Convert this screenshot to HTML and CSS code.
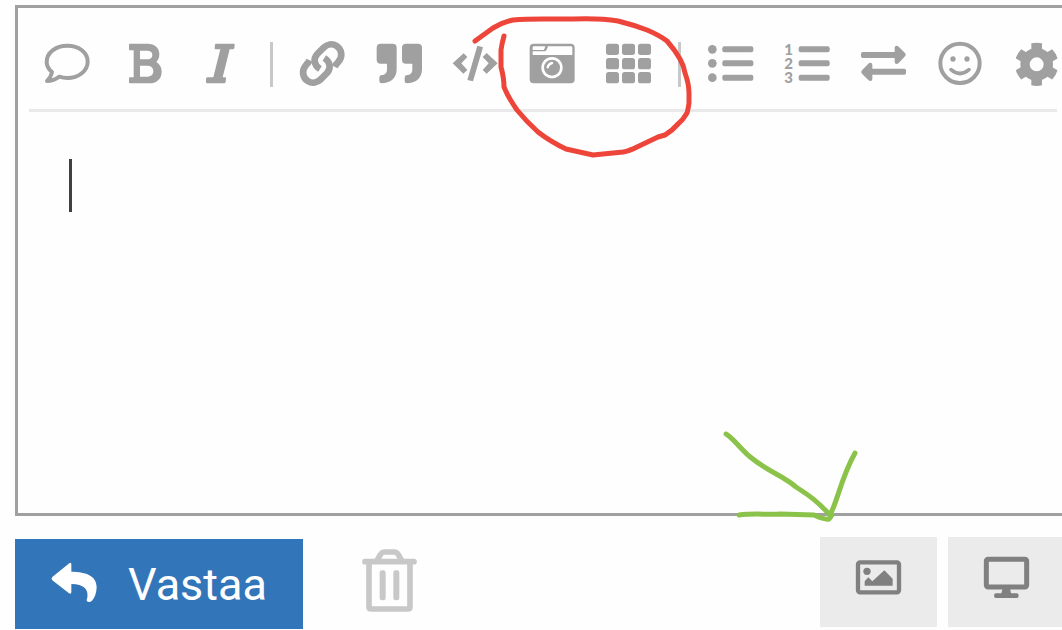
FILE: index.html
```html
<!DOCTYPE html>
<html lang="fi">
<head>
<meta charset="utf-8">
<meta name="viewport" content="width=device-width, initial-scale=1">
<title>Vastaa</title>
<link rel="stylesheet" href="styles.css">
</head>
<body>
<main class="composer">
  <section class="editor">
    <div class="toolbar-wrap">
      <div class="toolbar" role="toolbar" aria-label="Muotoilu">
        <button class="tool" type="button" aria-label="Kommentti"><svg class="icon" viewBox="0 0 144 144"><path class="line" stroke-width="12" stroke-linejoin="round" d="M27 96C16 87 11 76 11 66C11 38 38 17 73 17S134 38 134 65S107 114 73 114Q61 114 49 110Q32 123 12 123Q24 112 27 96Z"/></svg></button>
        <button class="tool" type="button" aria-label="Lihavointi"><svg class="icon" viewBox="-4 0 144 144"><path fill-rule="evenodd" d="M26 11H78C101 11 114 25 114 42C114 54 110 61 105 66C115 72 121 82 121 95C121 117 105 130 84 130H26Q23 130 23 127V115Q23 112 26 112H37V31H26Q23 31 23 28V14Q23 11 26 11ZM56 32V58H80Q93 57 93 45T80 32ZM56 77V110H80Q96 109 96 94T80 77Z"/></svg></button>
        <button class="tool" type="button" aria-label="Kursivointi"><svg class="icon" viewBox="-1 0 144 144"><path d="M59 11H112Q116 11 115 15L114 24Q113 28 109 28H100L79 112H86Q90 112 89 116L88 126Q87 130 83 130H33Q29 130 29 126V116Q30 112 34 112H51L72 28H59Q54 28 55 24L56 14Q56 11 59 11Z"/></svg></button>
        <span class="separator" role="separator"></span>
        <button class="tool" type="button" aria-label="Linkki"><svg class="icon" viewBox="0 0 144 144"><g class="line" stroke-width="20"><path d="M110 80Q114 72 120 67C136 50 131 28 116 18C102 9 87 13 77 23L58 42C45 56 48 76 66 87"/><path d="M35 61Q31 69 25 74C9 91 14 113 29 123C43 132 58 128 68 118L87 99C100 85 97 65 79 54"/></g></svg></button>
        <button class="tool" type="button" aria-label="Lainaus"><svg class="icon" viewBox="0 0 144 144"><path id="quote-mark" d="M17 11H53Q65 11 65 23V88C65 115 45 130 20 130Q13 130 13 123V113Q13 106 20 105C32 104 36 98 36 86V71H17Q5 71 5 59V23Q5 11 17 11Z"/><use href="#quote-mark" x="76"/></svg></button>
        <button class="tool" type="button" aria-label="Koodi"><svg class="icon" viewBox="0 0 144 144"><path d="M5 70L38 40L49 51L31 70L49 90L37 101ZM79 17L96 22L66 124L49 120ZM140 70L107 39L95 51L113 70L95 90L107 101Z"/></svg></button>
        <button class="tool" type="button" aria-label="Kuva"><svg class="icon" viewBox="0 0 144 144"><rect x="5" y="11" width="135" height="119" rx="12"/><path class="paper" d="M17 19H52L48 30H14V22Q14 19 17 19ZM60 19H129Q133 19 133 23V45H14V34H49Q54 34 56 29Z"/><circle class="paper" cx="72" cy="83" r="32"/><circle cx="72" cy="83" r="24"/><path d="M59 82Q61 72 72 69" fill="none" stroke="#fff" stroke-width="7" stroke-linecap="round"/></svg></button>
        <button class="tool" type="button" aria-label="Galleria"><svg class="icon" viewBox="2 0 144 144"><g id="grid-row"><rect x="5" y="11" width="39" height="34" rx="8"/><rect x="53" y="11" width="39" height="34" rx="8"/><rect x="101" y="11" width="39" height="34" rx="8"/></g><use href="#grid-row" y="43"/><use href="#grid-row" y="85"/></svg></button>
        <span class="separator" role="separator"></span>
        <button class="tool" type="button" aria-label="Luettelo"><svg class="icon" viewBox="1 0 144 144"><circle cx="17" cy="28" r="13"/><circle cx="17" cy="70" r="13"/><circle cx="17" cy="113" r="13"/><g id="list-lines"><rect x="47" y="19" width="93" height="18" rx="6"/><rect x="47" y="61" width="93" height="18" rx="6"/><rect x="47" y="104" width="93" height="18" rx="6"/></g></svg></button>
        <button class="tool" type="button" aria-label="Numeroitu luettelo"><svg class="icon" viewBox="0 0 144 144"><g class="digits"><text x="17" y="45">1</text><text x="17" y="87">2</text><text x="17" y="129">3</text></g><use href="#list-lines"/></svg></button>
        <button class="tool" type="button" aria-label="Vaihda"><svg class="icon" viewBox="2 0 144 144"><path id="swap-arrow" d="M10 36H106V23Q106 17 112 17Q115 17 118 20L137 39Q142 44 137 49L118 69Q115 72 112 72Q106 72 106 66V54H10Q5 54 5 49V41Q5 36 10 36Z"/><use href="#swap-arrow" transform="rotate(180 72.5 70)"/></svg></button>
        <button class="tool" type="button" aria-label="Hymiö"><svg class="icon" viewBox="0 0 144 144"><circle class="line" cx="72" cy="70" r="59" stroke-width="12"/><circle cx="51" cy="57" r="8"/><circle cx="93" cy="57" r="8"/><path class="line" stroke-width="11" stroke-linecap="round" d="M45 89Q72 112 99 89"/></svg></button>
        <button class="tool" type="button" aria-label="Asetukset"><svg class="icon" viewBox="0 0 144 144"><circle class="line" cx="71" cy="73" r="35" stroke-width="28"/><path id="gear-teeth" d="M55 10Q71 6 87 10V34H55ZM55 136Q71 140 87 136V112H55Z"/><use href="#gear-teeth" transform="rotate(60 71 73)"/><use href="#gear-teeth" transform="rotate(120 71 73)"/></svg></button>
      </div>
    </div>
    <div class="writing">
      <textarea class="message" aria-label="Viesti"></textarea>
      <span class="caret"></span>
    </div>
    <svg class="ink" viewBox="0 0 1062 630" aria-hidden="true">
      <path class="red" d="M475 41L493 28Q503 22 513 20Q525 19 543 19H573Q600 18 618 21Q634 25 647 30Q659 35 667 41Q675 50 680 59Q684 66 685 73Q689 84 689 93V103Q688 110 687 113Q683 120 678 124Q672 131 665 135L658 137L637 147Q629 151 623 152L593 155L566 149Q551 142 538 132Q526 121 517 110Q508 97 504 87Q504 78 501 67V50Q502 43 504 36"/>
      <path class="green" d="M726 434C732 437 738 446 749 456C768 472 782 475 796 487C810 496 817 501 830 515C838 500 841 478 855 453"/>
      <path class="green" d="M739 515C755 513 770 515 780 514L814 515Q825 520 829 519L832 515"/>
    </svg>
  </section>
  <footer class="actions">
    <button class="reply" type="button"><svg class="icon" viewBox="0 0 144 144"><path d="M7 51L56 11Q64 5 64 14V35C110 36 140 48 140 82Q139 108 126 122Q118 129 111 124Q108 121 112 113C116 88 102 72 64 72V96Q64 104 56 99L7 61Q2 56 7 51Z"/></svg><span>Vastaa</span></button>
    <button class="trash" type="button" aria-label="Poista"><svg class="trash-icon" viewBox="66 57 165 189"><path class="line" stroke-width="17" stroke-linejoin="round" d="M87 96V230Q87 237 94 237H203Q210 237 210 230V96"/><path class="line" stroke-width="17" stroke-linecap="round" d="M75 95H222M112 90L121 74Q126 66 134 66H163Q170 66 175 74L184 90"/><rect x="119" y="121" width="18" height="90" rx="7"/><rect x="160" y="121" width="18" height="90" rx="7"/></svg></button>
    <div class="views">
      <button class="view" type="button" aria-label="Lisää kuva"><svg class="icon" viewBox="2 2 144 144"><rect class="line" x="11" y="27" width="123" height="90" rx="6" stroke-width="13"/><circle cx="38" cy="54" r="11"/><path d="M31 97V84L42 72L54 84L90 51L115 76V97Z"/></svg></button>
      <button class="view" type="button" aria-label="Esikatselu"><svg class="icon" viewBox="2 1 144 144"><rect class="line" x="12" y="17" width="121" height="83" rx="5" stroke-width="15"/><path d="M61 104H83L86 119H103Q109 119 109 126T103 133H41Q35 133 35 126T41 119H57Z"/></svg></button>
    </div>
  </footer>
</main>
</body>
</html>
```
FILE: styles.css
```css
* {
  box-sizing: border-box;
}

body {
  margin: 0;
  background: #fefefe;
  font-family: Roboto, sans-serif;
  overflow: hidden;
}

button {
  margin: 0;
  padding: 0;
  border: 0;
  background: none;
  color: inherit;
  font: inherit;
  cursor: pointer;
}

.composer {
  padding: 5px 0 0 15px;
}

.editor {
  border: 3px solid #a0a0a0;
  border-right: 0;
  background: #fefefe;
}

.toolbar-wrap {
  margin: 0 5px 0 11px;
  border-bottom: 3px solid #e9e9e9;
}

.toolbar {
  display: flex;
  align-items: center;
  margin-right: -18px;
  padding: 26px 0 15px;
  color: #a0a0a0;
}

.tool {
  display: flex;
  flex: 3 1 0;
  justify-content: center;
  min-width: 0;
  padding: 6px 0;
}

.separator {
  display: flex;
  flex: 1 1 0;
  justify-content: center;
}

.separator::before {
  content: "";
  width: 3px;
  height: 45px;
  background: #c8c8c8;
}

.icon {
  display: block;
  flex: none;
  width: 48px;
  height: 48px;
  fill: currentColor;
}

.line {
  fill: none;
  stroke: currentColor;
}

.paper {
  fill: #fefefe;
}

.digits {
  font: 900 45px Lato, sans-serif;
  text-anchor: middle;
}

.writing {
  position: relative;
}

.message {
  display: block;
  width: 100%;
  height: 401px;
  padding: 47px 51px;
  border: 0;
  outline: 0;
  background: none;
  color: #404040;
  font: 44px/53px Roboto, sans-serif;
  resize: none;
}

.caret {
  position: absolute;
  top: 47px;
  left: 51px;
  width: 3px;
  height: 53px;
  background: #404040;
}

.ink {
  position: absolute;
  top: 0;
  left: 0;
  width: 1062px;
  height: 630px;
  pointer-events: none;
  fill: none;
  stroke-linecap: round;
  stroke-linejoin: round;
}

.red {
  stroke: #ee453a;
  stroke-width: 5;
}

.green {
  stroke: #8bc34a;
  stroke-width: 5;
}

.actions {
  display: flex;
  align-items: flex-start;
  margin-right: -3px;
  padding-top: 21px;
}

.reply {
  display: flex;
  align-items: center;
  gap: 30px;
  height: 90px;
  margin-top: 2px;
  padding: 0 36px 0 35px;
  background: #3375b9;
  color: #fff;
  font-size: 45px;
}

.trash {
  margin: 12px 0 0 59px;
  color: #c8c8c8;
}

.trash-icon {
  display: block;
  width: 55px;
  height: 63px;
  fill: currentColor;
}

.views {
  display: flex;
  gap: 11px;
  margin-left: auto;
}

.view {
  display: flex;
  justify-content: center;
  width: 117px;
  height: 90px;
  padding-top: 17px;
  background: #ebebeb;
  color: #808080;
}
```
